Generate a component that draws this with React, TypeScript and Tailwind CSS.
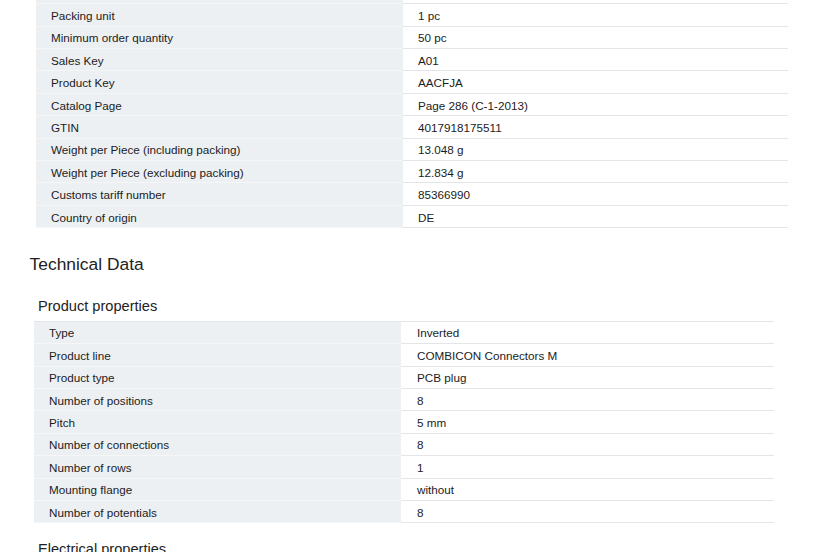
type Row = [string, string];

const commercial: Row[] = [
  ["Packing unit", "1 pc"],
  ["Minimum order quantity", "50 pc"],
  ["Sales Key", "A01"],
  ["Product Key", "AACFJA"],
  ["Catalog Page", "Page 286 (C-1-2013)"],
  ["GTIN", "4017918175511"],
  ["Weight per Piece (including packing)", "13.048 g"],
  ["Weight per Piece (excluding packing)", "12.834 g"],
  ["Customs tariff number", "85366990"],
  ["Country of origin", "DE"],
];

const productProps: Row[] = [
  ["Type", "Inverted"],
  ["Product line", "COMBICON Connectors M"],
  ["Product type", "PCB plug"],
  ["Number of positions", "8"],
  ["Pitch", "5 mm"],
  ["Number of connections", "8"],
  ["Number of rows", "1"],
  ["Mounting flange", "without"],
  ["Number of potentials", "8"],
];

function DataRow({ label, value, valuePad }: { label: string; value: string; valuePad: string }) {
  return (
    <div className="grid h-[22.4px] grid-cols-[367px_1fr] text-[11.7px] leading-[14px]">
      <div className="flex items-center border-b border-[#f5f6f8] bg-[#edf0f3] pl-[15px] pt-[2px]">{label}</div>
      <div className={`flex items-center border-b border-[#e3e5e8] pt-[2px] ${valuePad}`}>{value}</div>
    </div>
  );
}

export default function App() {
  return (
    <div className="h-[552px] w-[830px] overflow-hidden bg-white font-['Liberation_Sans',Arial,sans-serif] text-[#1c1c1c]">
      {/* General / commercial data, scrolled part way: the row above is only a sliver */}
      <div className="-mt-[18.1px] ml-[36px] w-[752px]">
        <DataRow label="" value="" valuePad="pl-[15px]" />
        {commercial.map(([l, v]) => (
          <DataRow key={l} label={l} value={v} valuePad="pl-[15px]" />
        ))}
      </div>

      <h2 className="mt-[25.8px] h-[20px] pl-[29.6px] text-[17.4px] font-normal leading-[20px] text-[#222]">
        Technical Data
      </h2>

      <h3 className="mt-[23.8px] h-[17px] pl-[38px] text-[14.6px] font-normal leading-[17px] text-[#222]">
        Product properties
      </h3>

      <div className="ml-[34px] mt-[6px] w-[740px] border-t border-[#e3e5e8]">
        {productProps.map(([l, v]) => (
          <DataRow key={l} label={l} value={v} valuePad="pl-[16px]" />
        ))}
      </div>

      <h3 className="mt-[17.5px] h-[17px] pl-[38px] text-[14.6px] font-normal leading-[17px] text-[#222]">
        Electrical properties
      </h3>
    </div>
  );
}
